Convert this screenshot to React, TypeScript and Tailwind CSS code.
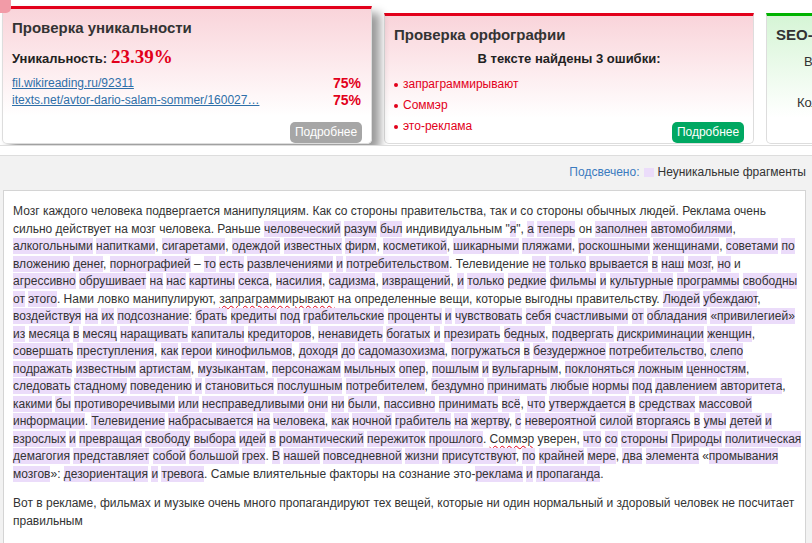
import React from 'react';

// {word} — неуникальный фрагмент, ~word~ — орфографическая ошибка
const paragraphs: string[][] = [
    [
        'Мозг каждого человека подвергается манипуляциям. Как со стороны правительства, так и со стороны обычных людей. Реклама очень',
        'сильно действует на мозг человека. Раньше {человеческий} {разум} {был} индивидуальным "{я}", {а} {теперь} он {заполнен} {автомобилями},',
        '{алкогольными} {напитками}, {сигаретами}, {одеждой} {известных} {фирм}, {косметикой}, {шикарными} {пляжами}, {роскошными} {женщинами}, {советами} {по}',
        '{вложению} {денег}, {порнографией} – {то} {есть} {развлечениями} {и} {потребительством}. Телевидение {не} {только} {врывается} {в} {наш} {мозг}, {но} и',
        '{агрессивно} {обрушивает} {на} {нас} {картины} {секса}, {насилия}, {садизма}, {извращений}, {и} {только} {редкие} {фильмы} {и} {культурные} {программы} {свободны}',
        '{от} {этого}. Нами ловко манипулируют, ~запраграммирывают~ на определенные вещи, которые выгодны правительству. {Людей} {убеждают},',
        '{воздействуя} {на} {их} {подсознание}: {брать} {кредиты} {под} {грабительские} {проценты} {и} {чувствовать} {себя} {счастливыми} {от} {обладания} {«привилегией»}',
        '{из} {месяца} {в} {месяц} {наращивать} {капиталы} {кредиторов}, {ненавидеть} {богатых} {и} {презирать} {бедных}, {подвергать} {дискриминации} {женщин},',
        '{совершать} {преступления}, {как} {герои} {кинофильмов}, {доходя} {до} {садомазохизма}, {погружаться} {в} {безудержное} {потребительство}, {слепо}',
        '{подражать} {известным} {артистам}, {музыкантам}, {персонажам} {мыльных} {опер}, {пошлым} {и} {вульгарным}, {поклоняться} {ложным} {ценностям},',
        '{следовать} {стадному} {поведению} {и} {становиться} {послушным} {потребителем}, {бездумно} {принимать} {любые} {нормы} {под} {давлением} {авторитета},',
        '{какими} {бы} {противоречивыми} {или} {несправедливыми} {они} {ни} {были}, {пассивно} {принимать} {всё}, {что} {утверждается} {в} {средствах} {массовой}',
        '{информации}. {Телевидение} {набрасывается} {на} {человека}, {как} {ночной} {грабитель} {на} {жертву}, {с} {невероятной} {силой} {вторгаясь} {в} {умы} {детей} {и}',
        '{взрослых} {и} {превращая} {свободу} {выбора} {идей} {в} {романтический} {пережиток} {прошлого}. ~Соммэр~ уверен, {что} {со} {стороны} {Природы} {политическая}',
        '{демагогия} {представляет} {собой} {большой} {грех}. {В} {нашей} {повседневной} {жизни} {присутствуют}, {по} {крайней} {мере}, {два} {элемента} «{промывания}',
        '{мозгов}»: {дезориентация} {и} {тревога}. Самые влиятельные факторы на сознание это-{реклама} {и} {пропаганда}.',
    ],
    [
        'Вот в рекламе, фильмах и музыке очень много пропагандируют тех вещей, которые ни один нормальный и здоровый человек не посчитает',
        'правильным',
    ],
];

const sources = [
    { url: 'fil.wikireading.ru/92311', pct: '75%' },
    { url: 'itexts.net/avtor-dario-salam-sommer/160027…', pct: '75%' },
];

const errors = ['запраграммирывают', 'Соммэр', 'это-реклама'];

function renderLine(line: string) {
    return line.split(/(\{[^}]+\}|~[^~]+~)/).map((part, i) => {
        if (part.startsWith('{')) {
            return (
                <mark key={i} className="bg-[#ebdcfa] py-px text-[#333]">
                    {part.slice(1, -1)}
                </mark>
            );
        }
        if (part.startsWith('~')) {
            return (
                <span key={i} className="underline decoration-[#e2001a] decoration-wavy decoration-1 underline-offset-2">
                    {part.slice(1, -1)}
                </span>
            );
        }
        return part;
    });
}

export default function App() {
    return (
        <div className="relative flex h-[543px] w-full flex-col overflow-hidden bg-white font-['Liberation_Sans',Arial,sans-serif] text-[#333]">
            <div className="absolute left-0 top-0 z-20 h-[13px] w-[11px] rounded-br-[5px] bg-[#f29ba7]" />

            {/* Result cards */}
            <div className="flex h-[146px] shrink-0 items-start gap-3 overflow-hidden border-b border-[#dddddd] pl-[2px]">
                {/* Uniqueness */}
                <div className="relative z-10 mt-[6px] flex h-[138px] w-[370px] shrink-0 flex-col rounded-b-[5px] border border-t-[3px] border-[#dddddd] border-t-[#e2001a] bg-linear-to-b from-[#f9d4da] to-white to-80% px-[9px] pt-[9px] shadow-[8px_7px_10px_rgba(0,0,0,0.4)]">
                    <h2 className="text-[15px] font-bold leading-[20px] text-[#333]">Проверка уникальности</h2>
                    <div className="mt-[7px] flex items-baseline gap-1">
                        <span className="text-[13px] font-bold text-[#222]">Уникальность:</span>
                        <span className="font-['Liberation_Serif',serif] text-[19px] font-bold leading-[24px] text-[#e2001a]">23.39%</span>
                    </div>
                    <div className="mt-[6px] pr-[1px]">
                        {sources.map((s) => (
                            <div key={s.url} className="flex items-center justify-between text-[12px] leading-[17px]">
                                <a className="text-[#2f6fa8] underline">{s.url}</a>
                                <span className="text-[14px] font-bold text-[#e2001a]">{s.pct}</span>
                            </div>
                        ))}
                    </div>
                    <button className="mt-auto self-end rounded-[5px] bg-[#a6a6a6] h-[21px] w-[72px] text-[12px] leading-[21px] text-white">
                        Подробнее
                    </button>
                </div>

                {/* Spelling */}
                <div className="mt-[13px] flex h-[131px] w-[370px] shrink-0 flex-col rounded-b-[5px] border border-t-[3px] border-[#dddddd] border-t-[#e2001a] bg-linear-to-b from-[#f9d4da] to-white to-80% px-[9px] pt-[9px]">
                    <h2 className="text-[15px] font-bold leading-[20px] text-[#333]">Проверка орфографии</h2>
                    <div className="mt-[5px] text-center text-[13px] font-bold leading-[18px] text-[#222]">
                        В тексте найдены 3 ошибки:
                    </div>
                    <div className="mt-[6px] flex flex-1 justify-between">
                        <ul>
                            {errors.map((e) => (
                                <li key={e} className="flex items-center gap-[5px] text-[12px] leading-[21px] text-[#e2001a]">
                                    <span className="h-[4px] w-[4px] rounded-full bg-[#e2001a]" />
                                    {e}
                                </li>
                            ))}
                        </ul>
                        <button className="self-end rounded-[5px] bg-[#00a862] h-[21px] w-[72px] text-[12px] leading-[21px] text-white">
                            Подробнее
                        </button>
                    </div>
                </div>

                {/* SEO */}
                <div className="mt-[13px] flex h-[131px] w-[370px] shrink-0 flex-col rounded-b-[5px] border border-t-[3px] border-[#dddddd] border-t-[#00b300] bg-linear-to-b from-[#d6f5d6] to-white to-80% px-[9px] pt-[9px]">
                    <h2 className="text-[15px] font-bold leading-[20px] text-[#333]">SEO-анализ текста</h2>
                    <div className="mt-[8px] pl-[28px] text-[13px] leading-[18px]">Водность текста: 12%</div>
                    <div className="mt-[23px] pl-[21px] text-[13px] leading-[18px]">Количество слов: 340</div>
                </div>
            </div>

            {/* Text with highlighted fragments */}
            <div className="mt-[9px] flex flex-1 flex-col border-t border-[#dddddd] bg-[#f2f2f2] pl-[3px] pr-[6px] pt-2">
                <div className="flex items-center justify-end text-[12px] leading-[17px]">
                    <span className="text-[#3b7bbf]">Подсвечено:</span>
                    <span className="ml-[5px] mr-[3px] h-[9px] w-[10px] bg-[#ebdcfa]" />
                    <span>Неуникальные фрагменты</span>
                </div>
                <div className="mt-[9px] border border-[#d4d4d4] bg-white pb-4 pl-[9px] pt-3 text-[12px] text-[#333]">
                    {paragraphs.map((lines, p) => (
                        <div key={p} className={p > 0 ? 'mt-3' : ''}>
                            {lines.map((line, i) => (
                                <div key={i} className="whitespace-nowrap leading-[17.5px]">
                                    {renderLine(line)}
                                </div>
                            ))}
                        </div>
                    ))}
                </div>
            </div>
        </div>
    );
}
